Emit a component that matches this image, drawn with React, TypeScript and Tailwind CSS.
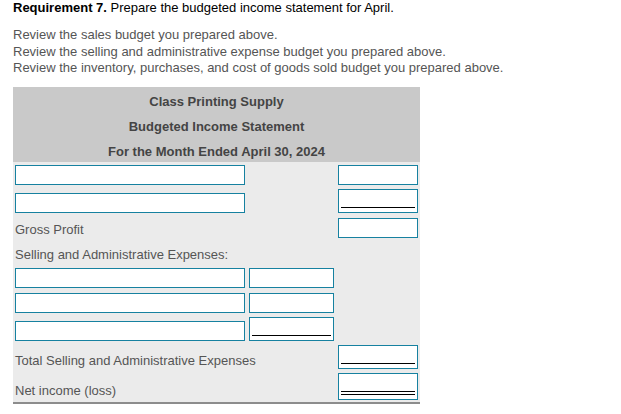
import React from "react";

const Box = ({ w, h, line }: { w: string; h: string; line?: "single" | "double" }) => (
  <div className={`${w} ${h} shrink-0 border border-[#1681a0] bg-white flex flex-col justify-end px-[2px] pb-[4px]`}>
    {line === "single" && <div className="h-[1px] bg-black" />}
    {line === "double" && (
      <div className="flex flex-col gap-[2px]">
        <div className="h-[1px] bg-black" />
        <div className="h-[1px] bg-black" />
      </div>
    )}
  </div>
);

export default function App() {
  return (
    <div className="w-[621px] h-[414px] bg-white pl-[13px] font-['Liberation_Sans',Arial,sans-serif] text-[13px]">
      <div className="leading-[16px] text-black">
        <span className="font-bold">Requirement 7.</span> Prepare the budgeted income statement for April.
      </div>
      <div className="mt-[11px] leading-[16.5px] text-[#555]">
        <div>Review the sales budget you prepared above.</div>
        <div>Review the selling and administrative expense budget you prepared above.</div>
        <div>Review the inventory, purchases, and cost of goods sold budget you prepared above.</div>
      </div>
      <div className="mt-[10px] w-[407px]">
        <div className="bg-[#c9c9c9] font-bold text-[#444] text-center">
          <div className="h-[25px] leading-[25px] pt-[2px]">Class Printing Supply</div>
          <div className="h-[25px] leading-[25px] pt-[2px]">Budgeted Income Statement</div>
          <div className="h-[25px] leading-[25px] pt-[2px]">For the Month Ended April 30, 2024</div>
        </div>
        <div className="bg-[#ebebeb] border-b-2 border-[#8c8c8c] pl-[2px] pr-[2px] text-[#555]">
          {/* row 1 */}
          <div className="h-[27px] flex items-start">
            <div className="mt-[3px]"><Box w="w-[230px]" h="h-[20px]" /></div>
            <div className="ml-auto mt-[3px]"><Box w="w-[80px]" h="h-[20px]" /></div>
          </div>
          {/* row 2 */}
          <div className="h-[27px] flex items-start">
            <div className="mt-[4px]"><Box w="w-[230px]" h="h-[20px]" /></div>
            <div className="ml-auto"><Box w="w-[80px]" h="h-[24px]" line="single" /></div>
          </div>
          {/* Gross profit */}
          <div className="h-[26px] flex items-start">
            <div className="mt-[6px] leading-[16px]">Gross Profit</div>
            <div className="ml-auto mt-[2px]"><Box w="w-[80px]" h="h-[20px]" /></div>
          </div>
          {/* S&A heading */}
          <div className="h-[24px] flex items-start">
            <div className="mt-[5px] leading-[16px]">Selling and Administrative Expenses:</div>
          </div>
          {/* S&A rows */}
          <div className="h-[25px] flex items-start gap-[4px]">
            <div className="mt-[2px]"><Box w="w-[230px]" h="h-[20px]" /></div>
            <div className="mt-[2px]"><Box w="w-[85px]" h="h-[20px]" /></div>
          </div>
          <div className="h-[25px] flex items-start gap-[4px]">
            <div className="mt-[2px]"><Box w="w-[230px]" h="h-[20px]" /></div>
            <div className="mt-[2px]"><Box w="w-[85px]" h="h-[20px]" /></div>
          </div>
          <div className="h-[27px] flex items-start gap-[4px]">
            <div className="mt-[5px]"><Box w="w-[230px]" h="h-[20px]" /></div>
            <div className="mt-[1px]"><Box w="w-[85px]" h="h-[24px]" line="single" /></div>
          </div>
          {/* Total S&A */}
          <div className="h-[28px] flex items-start">
            <div className="mt-[10px] leading-[16px]">Total Selling and Administrative Expenses</div>
            <div className="ml-auto mt-[2px]"><Box w="w-[80px]" h="h-[24px]" line="single" /></div>
          </div>
          {/* Net income */}
          <div className="h-[31px] flex items-start">
            <div className="mt-[12px] leading-[16px]">Net income (loss)</div>
            <div className="ml-auto mt-[2px]"><Box w="w-[80px]" h="h-[27px]" line="double" /></div>
          </div>
        </div>
      </div>
    </div>
  );
}
